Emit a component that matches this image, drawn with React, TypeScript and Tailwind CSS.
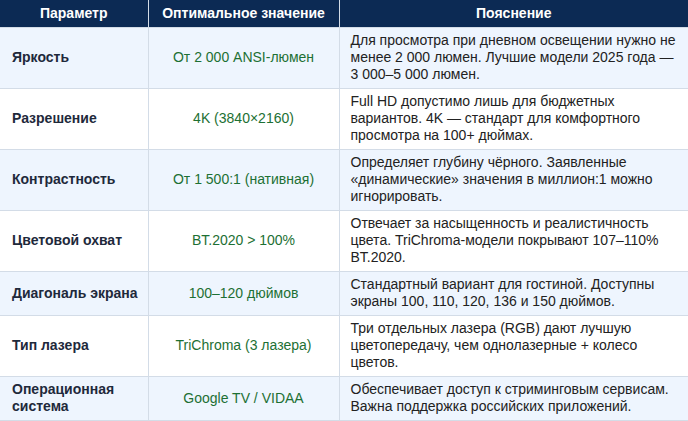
const rows = [
  {
    param: "Яркость",
    value: "От 2 000 ANSI-люмен",
    note: "Для просмотра при дневном освещении нужно не менее 2 000 люмен. Лучшие модели 2025 года — 3 000–5 000 люмен.",
  },
  {
    param: "Разрешение",
    value: "4K (3840×2160)",
    note: "Full HD допустимо лишь для бюджетных вариантов. 4K — стандарт для комфортного просмотра на 100+ дюймах.",
  },
  {
    param: "Контрастность",
    value: "От 1 500:1 (нативная)",
    note: "Определяет глубину чёрного. Заявленные «динамические» значения в миллион:1 можно игнорировать.",
  },
  {
    param: "Цветовой охват",
    value: "BT.2020 > 100%",
    note: "Отвечает за насыщенность и реалистичность цвета. TriChroma-модели покрывают 107–110% BT.2020.",
  },
  {
    param: "Диагональ экрана",
    value: "100–120 дюймов",
    note: "Стандартный вариант для гостиной. Доступны экраны 100, 110, 120, 136 и 150 дюймов.",
  },
  {
    param: "Тип лазера",
    value: "TriChroma (3 лазера)",
    note: "Три отдельных лазера (RGB) дают лучшую цветопередачу, чем однолазерные + колесо цветов.",
  },
  {
    param: "Операционная система",
    value: "Google TV / VIDAA",
    note: "Обеспечивает доступ к стриминговым сервисам. Важна поддержка российских приложений.",
  },
]

export default function App() {
  return (
    <div className="w-[688px] bg-white font-['Liberation_Sans',Arial,sans-serif] text-[14px] leading-[17px]">
      <table className="w-full table-fixed border-collapse">
        <colgroup>
          <col className="w-[148px]" />
          <col className="w-[191px]" />
          <col />
        </colgroup>
        <thead>
          <tr className="bg-[#0c2a54] text-white">
            <th className="h-[27px] px-3 text-center font-bold border-r border-[#d3dce7]">Параметр</th>
            <th className="h-[27px] px-3 text-center font-bold border-r border-[#d3dce7]">Оптимальное значение</th>
            <th className="h-[27px] px-3 text-center font-bold">Пояснение</th>
          </tr>
        </thead>
        <tbody>
          {rows.map((r, i) => (
            <tr key={r.param} className={i % 2 === 0 ? "bg-[#eef5fe]" : "bg-white"}>
              <td className="border border-l-0 border-[#d3dce7] pl-3 pr-1 py-[4.5px] font-bold text-[#1e293b]">{r.param}</td>
              <td className="border border-[#d3dce7] px-3 py-[4.5px] text-center text-[#1d7034]">{r.value}</td>
              <td className="border border-r-0 border-[#d3dce7] pl-[11px] pr-2 py-[4.5px] text-[#222]">{r.note}</td>
            </tr>
          ))}
        </tbody>
      </table>
    </div>
  )
}
